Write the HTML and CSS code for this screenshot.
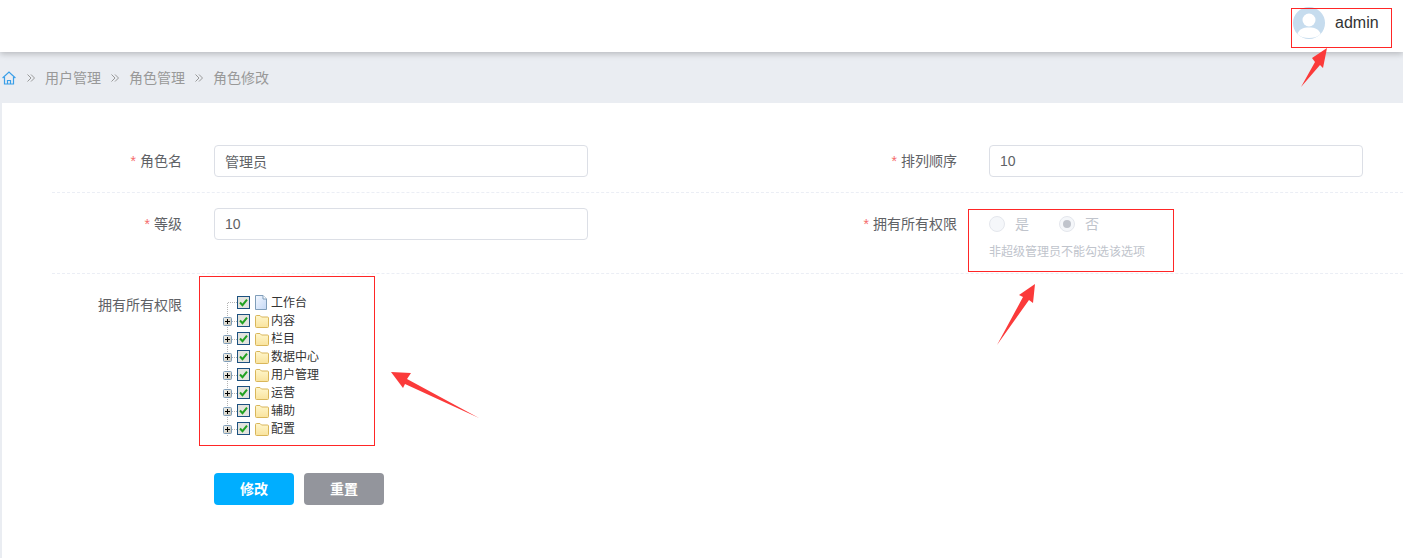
FILE: index.html
```html
<!DOCTYPE html>
<html lang="zh-CN">
<head>
<meta charset="utf-8">
<title>角色修改</title>
<link rel="stylesheet" href="styles.css">
</head>
<body>
<svg class="defs" width="0" height="0" aria-hidden="true">
  <defs>
    <linearGradient id="folderFill" x1="0" y1="0" x2="0" y2="1">
      <stop offset="0" stop-color="#fff6cc"/>
      <stop offset="1" stop-color="#f9e39d"/>
    </linearGradient>
    <linearGradient id="fileFill" x1="0" y1="0" x2="1" y2="1">
      <stop offset="0" stop-color="#f4f8ff"/>
      <stop offset="1" stop-color="#c4d8f5"/>
    </linearGradient>
    <linearGradient id="plusFill" x1="0" y1="0" x2="1" y2="1">
      <stop offset="0" stop-color="#f5f4ee"/>
      <stop offset="1" stop-color="#c9c5b6"/>
    </linearGradient>
  </defs>
  <symbol id="switch" viewBox="0 0 15 18">
    <path d="M5.500 0V18M10 10.500H15" stroke="#b5b5b5" stroke-dasharray="1 1" fill="none"/>
    <rect x="1.500" y="6.500" width="8" height="8" rx="1" fill="url(#plusFill)" stroke="#7f9db9"/>
    <path d="M3 10.500H8M5.500 8V13" stroke="#000" fill="none"/>
  </symbol>
  <symbol id="check" viewBox="0 0 13 13">
    <rect x=".5" y=".5" width="12" height="12" fill="#e4e4de" stroke="#1c5180"/>
    <path d="M3 6.500 5.500 9.200 10 3.600" stroke="#21a121" stroke-width="2" fill="none"/>
  </symbol>
  <symbol id="folder" viewBox="0 0 15 16">
    <path d="M1.500 4.700Q1.500 3.500 2.500 3.500H6L7.500 5H13.500Q14.500 5 14.500 6V14.500Q14.500 15.500 13.500 15.500H2.500Q1.500 15.500 1.500 14.500Z" fill="url(#folderFill)" stroke="#d9b65a"/>
  </symbol>
  <symbol id="file" viewBox="0 0 15 16">
    <path d="M1.500 1.500H9L12.500 5V15.500H1.500Z" fill="url(#fileFill)" stroke="#7f9db9"/>
    <path d="M9 1.500V5H12.500" fill="#fff" stroke="#7f9db9"/>
  </symbol>
  <symbol id="chev" viewBox="0 0 8 8">
    <path d="M.5.5 4 4 .5 7.500M4 .5 7.500 4 4 7.500" fill="none" stroke="#999"/>
  </symbol>
</svg>

<header class="topbar">
  <div class="user">
    <svg class="avatar" viewBox="0 0 32 32" aria-hidden="true">
      <circle cx="16" cy="16" r="16" fill="#c6dcee"/>
      <circle cx="16" cy="13" r="6.500" fill="#fff"/>
      <path d="M4.500 27C6 22 10 20.500 16 20.500S26 22 27.500 27C24.500 30 20.500 31 16 31S7.500 30 4.500 27Z" fill="#fff"/>
    </svg>
    <span class="user-name">admin</span>
  </div>
</header>

<nav class="crumbs">
  <svg class="home" viewBox="0 0 14 14" aria-hidden="true">
    <path d="M.6 7 7 1 13.400 7M2.500 6V13H11.500V6M5.500 13V9.500H8.500V13" fill="none" stroke="#3a9fe8" stroke-width="1.200"/>
  </svg>
  <svg class="sep"><use href="#chev"/></svg><span class="crumb">用户管理</span>
  <svg class="sep"><use href="#chev"/></svg><span class="crumb">角色管理</span>
  <svg class="sep"><use href="#chev"/></svg><span class="crumb">角色修改</span>
</nav>

<main class="panel">
  <form class="form">
    <div class="row row-first">
      <div class="field">
        <label class="label"><i>*</i>角色名</label>
        <input class="input" value="管理员">
      </div>
      <div class="field">
        <label class="label"><i>*</i>排列顺序</label>
        <input class="input" value="10">
      </div>
    </div>
    <div class="row row-second">
      <div class="field">
        <label class="label"><i>*</i>等级</label>
        <input class="input" value="10">
      </div>
      <div class="field">
        <label class="label"><i>*</i>拥有所有权限</label>
        <div class="control">
          <div class="radios">
            <span class="radio"><b class="dot"></b>是</span>
            <span class="radio"><b class="dot on"></b>否</span>
          </div>
          <p class="tip">非超级管理员不能勾选该选项</p>
        </div>
      </div>
    </div>
    <div class="tree-row">
      <label class="label tree-label">拥有所有权限</label>
      <ul class="tree">
        <li class="node"><svg class="sw"><path d="M5.500 10V18M6 9.500H15" stroke="#b5b5b5" stroke-dasharray="1 1" fill="none"/></svg><svg class="ck"><use href="#check"/></svg><svg class="ic"><use href="#file"/></svg>工作台</li>
        <li class="node"><svg class="sw"><use href="#switch"/></svg><svg class="ck"><use href="#check"/></svg><svg class="ic"><use href="#folder"/></svg>内容</li>
        <li class="node"><svg class="sw"><use href="#switch"/></svg><svg class="ck"><use href="#check"/></svg><svg class="ic"><use href="#folder"/></svg>栏目</li>
        <li class="node"><svg class="sw"><use href="#switch"/></svg><svg class="ck"><use href="#check"/></svg><svg class="ic"><use href="#folder"/></svg>数据中心</li>
        <li class="node"><svg class="sw"><use href="#switch"/></svg><svg class="ck"><use href="#check"/></svg><svg class="ic"><use href="#folder"/></svg>用户管理</li>
        <li class="node"><svg class="sw"><use href="#switch"/></svg><svg class="ck"><use href="#check"/></svg><svg class="ic"><use href="#folder"/></svg>运营</li>
        <li class="node"><svg class="sw"><use href="#switch"/></svg><svg class="ck"><use href="#check"/></svg><svg class="ic"><use href="#folder"/></svg>辅助</li>
        <li class="node"><svg class="sw"><use href="#switch"/></svg><svg class="ck"><use href="#check"/></svg><svg class="ic"><use href="#folder"/></svg>配置</li>
      </ul>
    </div>
    <div class="actions">
      <button type="button" class="btn btn-primary">修改</button>
      <button type="button" class="btn btn-reset">重置</button>
    </div>
  </form>
</main>

<svg class="marks" viewBox="0 0 1403 558" aria-hidden="true">
  <g fill="none" stroke="#f00" stroke-opacity=".85">
    <rect x="1291.500" y="8.500" width="100" height="39"/>
    <rect x="968.500" y="209.500" width="205" height="62"/>
    <rect x="199.500" y="276.500" width="175" height="169"/>
  </g>
  <g fill="#fb3a3a">
    <polygon points="1301,87 1315,62 1312,58 1327,48 1323,68 1320,65"/>
    <polygon points="997,345 1023,297 1019,295 1035,284 1033,303 1029,300"/>
    <polygon points="479,418 407,379 411,373 391,372 403,388 405,384"/>
  </g>
</svg>
</body>
</html>
```
FILE: styles.css
```css
* { box-sizing: border-box; }
html, body { height: 100%; }
body {
  margin: 0;
  position: relative;
  overflow: hidden;
  display: flex;
  flex-direction: column;
  background: #eaedf2;
  font-family: "Liberation Sans", "Noto Sans CJK SC", sans-serif;
  font-size: 14px;
  color: #606266;
}
.defs { position: absolute; }

.topbar {
  height: 52px;
  flex: none;
  background: #fff;
  display: flex;
  justify-content: flex-end;
  box-shadow: 0 2px 6px rgba(0, 0, 0, .22);
  position: relative;
}
.user {
  display: flex;
  align-items: flex-start;
  padding: 7px 24px 0 0;
}
.avatar { width: 32px; height: 32px; margin-right: 10px; }
.user-name { width: 44px; font-size: 16px; line-height: 31px; color: #333; }

.crumbs {
  height: 51px;
  flex: none;
  display: flex;
  align-items: center;
  padding: 0 0 2px 2px;
  color: #999;
}
.home { width: 14px; height: 14px; margin: 2px 11px 0 0; }
.sep { width: 8px; height: 8px; margin: 2px 10px 0 0; }
.crumb + .sep { margin-left: 10px; }

.panel {
  flex: 1;
  min-width: 0;
  margin-left: 2px;
  background: #fff;
  padding: 42px 0 0 50px;
}
.row {
  display: flex;
  border-bottom: 1px dashed #ebeef5;
}
.row-first { height: 48px; }
.row-second { height: 81px; padding-top: 15px; }
.field { width: 775px; flex: none; display: flex; align-items: flex-start; }
.field + .field { width: auto; flex: 1; min-width: 0; }
.label {
  width: 130px;
  flex: none;
  margin-right: 32px;
  text-align: right;
  line-height: 32px;
}
.label i {
  font-style: normal;
  color: #f56c6c;
  margin-right: 4px;
}
.input {
  width: 374px;
  height: 32px;
  padding: 0 10px;
  border: 1px solid #dcdfe6;
  border-radius: 4px;
  font: inherit;
  color: #606266;
  background: #fff;
  outline: none;
}
.control { width: 374px; }
.radios { display: flex; height: 32px; align-items: center; color: #c0c4cc; }
.radio { display: flex; align-items: center; margin-right: 30px; line-height: 30px; }
.dot {
  width: 16px;
  height: 16px;
  margin-right: 10px;
  border-radius: 50%;
  background: #f5f7fa;
  border: 1px solid #e4e7ed;
  display: flex;
  align-items: center;
  justify-content: center;
}
.dot.on::after {
  content: "";
  width: 8px;
  height: 8px;
  border-radius: 50%;
  background: #c0c4cc;
}
.tip { margin: 0; font-size: 12px; line-height: 24px; color: #c0c4cc; }

.tree-row { display: flex; padding-top: 15px; }
.tree {
  list-style: none;
  margin: 4px 0 0 8px;
  padding: 0;
  font-size: 12px;
  color: #333;
}
.node { display: flex; align-items: flex-start; height: 18px; line-height: 20px; }
.sw, .ck, .ic { align-self: center; flex: none; }
.sw { width: 15px; height: 18px; }
.ck { width: 13px; height: 13px; margin: 1px 4px 0 0; }
.ic { width: 15px; height: 16px; margin-right: 2px; }

.actions { display: flex; gap: 10px; margin: 36px 0 0 162px; }
.btn {
  width: 80px;
  height: 32px;
  padding: 0 0 2px;
  border: 0;
  border-radius: 4px;
  color: #fff;
  font: inherit;
  font-weight: 700;
}
.btn-primary { background: #00aeff; }
.btn-reset { background: #93959c; }

.marks {
  position: absolute;
  left: 0;
  top: 0;
  width: 1403px;
  height: 558px;
  pointer-events: none;
}
```
